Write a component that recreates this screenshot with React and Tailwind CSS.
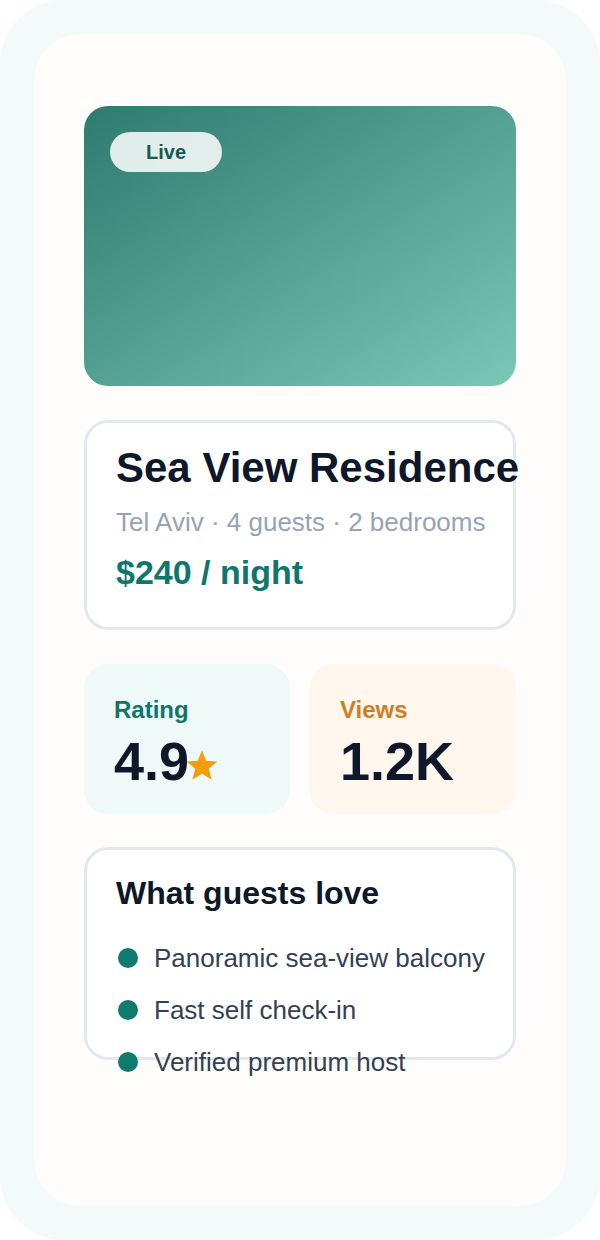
function Star() {
  return (
    <svg className="ml-[-5px] inline-block h-[35px] w-[36px]" viewBox="0 0 24 24" fill="#f59e0b">
      <polygon points="12,1.5 14.9,8.7 22.6,9.2 16.7,14.2 18.6,21.8 12,17.6 5.4,21.8 7.3,14.2 1.4,9.2 9.1,8.7" />
    </svg>
  );
}

function StatCard({ label, labelColor, bg, children }) {
  return (
    <div className={`h-[150px] flex-1 rounded-[24px] px-[30px] pt-[31px] ${bg}`}>
      <div className={`text-[24px] font-bold leading-[30px] ${labelColor}`}>{label}</div>
      <div className="mt-[6px] whitespace-nowrap text-[54px] font-bold leading-[60px] text-[#0f172a]">
        {children}
      </div>
    </div>
  );
}

const perks = ['Panoramic sea-view balcony', 'Fast self check-in', 'Verified premium host'];

export default function App() {
  return (
    <div className="h-[1240px] w-[600px] bg-white font-['Liberation_Sans',Arial,sans-serif]">
      <div className="h-full rounded-[64px] bg-[#f4f9fa] p-[34px]">
        <div className="flex h-full flex-col gap-[34px] rounded-[48px] bg-[#fffdfb] px-[50px] pt-[72px]">
          <div className="h-[280px] shrink-0 rounded-[24px] bg-linear-to-br from-[#2d7b70] to-[#7bc8b6] p-[26px]">
            <div className="flex h-[40px] w-[112px] items-center justify-center rounded-full bg-white/85 text-[20px] font-bold text-[#135c50]">
              Live
            </div>
          </div>

          <div className="h-[210px] shrink-0 rounded-[24px] border-[3px] border-[#e2e8f0] bg-white pl-[29px] pt-[20px]">
            <h1 className="whitespace-nowrap text-[42px] font-bold leading-[50px] text-[#0f172a]">
              Sea View Residence
            </h1>
            <p className="mt-[11px] whitespace-nowrap text-[26px] leading-[36px] text-[#94a3b8]">
              Tel Aviv · 4 guests · 2 bedrooms
            </p>
            <p className="mt-[12px] text-[34px] font-bold leading-[40px] text-[#0f766e]">$240 / night</p>
          </div>

          <div className="flex shrink-0 gap-[20px]">
            <StatCard label="Rating" labelColor="text-[#0f766e]" bg="bg-[#effaf8]">
              4.9
              <Star />
            </StatCard>
            <StatCard label="Views" labelColor="text-[#d17f1e]" bg="bg-[#fff6ee]">
              1.2K
            </StatCard>
          </div>

          <div className="-mt-[1px] h-[213px] shrink-0 rounded-[24px] border-[3px] border-[#e2e8f0] bg-white pl-[29px] pt-[24px]">
            <h2 className="text-[32px] font-bold leading-[38px] text-[#0f172a]">What guests love</h2>
            <ul className="mt-[30px] flex flex-col gap-[20px]">
              {perks.map((perk) => (
                <li key={perk} className="flex h-[32px] items-center gap-[16px] pl-[2px]">
                  <span className="h-[20px] w-[20px] shrink-0 rounded-full bg-[#0f7a6e]" />
                  <span className="whitespace-nowrap text-[26px] leading-[32px] text-[#334155]">{perk}</span>
                </li>
              ))}
            </ul>
          </div>
        </div>
      </div>
    </div>
  );
}
